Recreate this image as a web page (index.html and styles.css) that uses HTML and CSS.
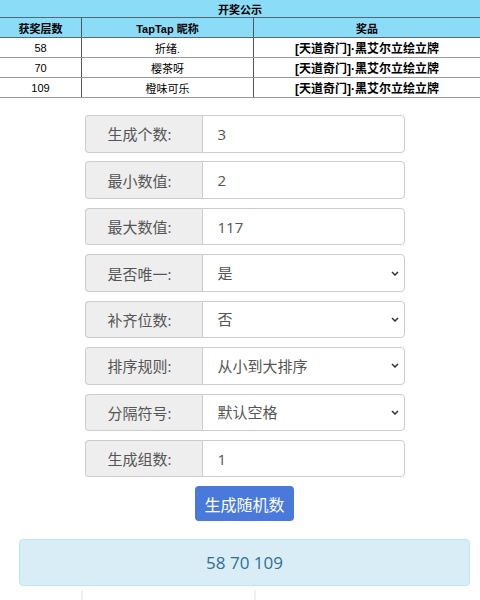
FILE: index.html
```html
<!DOCTYPE html>
<html lang="zh-CN">
<head>
    <meta charset="UTF-8">
    <meta name="viewport" content="width=device-width, initial-scale=1.0">
    <title>随机数生成</title>
    <link rel="stylesheet" href="styles.css">
</head>
<body>
    <table class="prize-table">
        <tr class="title-row">
            <th colspan="3">开奖公示</th>
        </tr>
        <tr class="head-row">
            <th class="col-floor">获奖层数</th>
            <th class="col-name">TapTap 昵称</th>
            <th class="col-prize">奖品</th>
        </tr>
        <tr>
            <td>58</td>
            <td>折绪.</td>
            <td class="prize">[天道奇门]·黑艾尔立绘立牌</td>
        </tr>
        <tr>
            <td>70</td>
            <td>樱茶呀</td>
            <td class="prize">[天道奇门]·黑艾尔立绘立牌</td>
        </tr>
        <tr>
            <td>109</td>
            <td>橙味可乐</td>
            <td class="prize">[天道奇门]·黑艾尔立绘立牌</td>
        </tr>
    </table>

    <div class="generator">
        <div class="input-group">
            <span class="group-label">生成个数:</span>
            <input class="group-field" type="text" value="3">
        </div>
        <div class="input-group">
            <span class="group-label">最小数值:</span>
            <input class="group-field" type="text" value="2">
        </div>
        <div class="input-group">
            <span class="group-label">最大数值:</span>
            <input class="group-field" type="text" value="117">
        </div>
        <div class="input-group">
            <span class="group-label">是否唯一:</span>
            <select class="group-field">
                <option>是</option>
                <option>否</option>
            </select>
        </div>
        <div class="input-group">
            <span class="group-label">补齐位数:</span>
            <select class="group-field">
                <option>否</option>
                <option>是</option>
            </select>
        </div>
        <div class="input-group">
            <span class="group-label">排序规则:</span>
            <select class="group-field">
                <option>从小到大排序</option>
                <option>从大到小排序</option>
                <option>不排序</option>
            </select>
        </div>
        <div class="input-group">
            <span class="group-label">分隔符号:</span>
            <select class="group-field">
                <option>默认空格</option>
                <option>逗号</option>
            </select>
        </div>
        <div class="input-group">
            <span class="group-label">生成组数:</span>
            <input class="group-field" type="text" value="1">
        </div>

        <button class="btn-generate" type="button">生成随机数</button>

        <div class="result-box">58 70 109</div>
    </div>

    <div class="table-tail">
        <span class="tail-cell tail-first"></span>
        <span class="tail-cell tail-second"></span>
        <span class="tail-cell"></span>
    </div>
</body>
</html>
```

FILE: styles.css
```css
body {
    margin: 0;
    font-family: "Liberation Sans", "Noto Sans CJK SC", sans-serif;
    background: #fff;
    overflow: hidden;
}

/* 开奖公示表格 */
.prize-table {
    width: 100%;
    border-collapse: collapse;
    font-size: 11px;
    color: #000;
}

.prize-table th,
.prize-table td {
    padding: 0;
    text-align: center;
    border-bottom: 1px solid #999;
}

.title-row th {
    height: 17px;
    background: #8adcf7;
    font-weight: bold;
    border-bottom: 1px solid #4a6a78;
}

.head-row th {
    height: 19px;
    background: #8adcf7;
    font-weight: bold;
    border-bottom: 1px solid #5a6a70;
}

.prize-table td {
    height: 19px;
}

.col-floor {
    width: 81px;
}

.col-name {
    width: 171px;
}

.prize-table tr > :nth-child(2) {
    border-left: 1px solid #555;
    border-right: 1px solid #555;
}

.title-row th {
    border-left: none !important;
    border-right: none !important;
}

.prize-table .prize {
    font-size: 12px;
    font-weight: bold;
}

/* 随机数表单 */
.generator {
    padding: 17px 0 0 19px;
    width: 451px;
    display: flex;
    flex-direction: column;
    align-items: center;
}

.input-group {
    display: flex;
    width: 320px;
    height: 37.5px;
    margin-bottom: 8.93px;
    font-family: "Open Sans", "Noto Sans CJK SC", sans-serif;
    font-size: 15px;
    color: #555;
}

.group-label {
    box-sizing: border-box;
    flex: 0 0 117px;
    display: flex;
    align-items: center;
    justify-content: center;
    padding-right: 8px;
    background: #eee;
    border: 1px solid #ccc;
    border-right: none;
    border-radius: 4px 0 0 4px;
}

.group-field {
    flex: 1 1 auto;
    min-width: 0;
    width: 0;
    box-sizing: border-box;
    height: 100%;
    padding: 0 15px;
    border: 1px solid #ccc;
    border-radius: 0 4px 4px 0;
    background: #fff;
    font: inherit;
    color: #555;
    outline: none;
}

select.group-field {
    appearance: none;
    padding-left: 15px;
    background-image: url("data:image/svg+xml,%3Csvg xmlns='http://www.w3.org/2000/svg' width='8' height='5'%3E%3Cpath d='M1 1l3 3 3-3' fill='none' stroke='%23333' stroke-width='1.5'/%3E%3C/svg%3E");
    background-repeat: no-repeat;
    background-position: right 5px center;
}

.btn-generate {
    width: 99px;
    height: 35px;
    border: none;
    border-radius: 4px;
    background: #4879db;
    color: #fff;
    font-family: "Noto Sans CJK SC", sans-serif;
    font-size: 16px;
    cursor: pointer;
}

.result-box {
    box-sizing: border-box;
    width: 451px;
    height: 47px;
    margin-top: 17.6px;
    display: flex;
    align-items: center;
    justify-content: center;
    background: #d9edf7;
    border: 1px solid #bce8f1;
    border-radius: 4px;
    color: #31708f;
    font-family: "Open Sans", sans-serif;
    font-size: 17px;
}

/* 下方表格的残留竖线 */
.table-tail {
    display: flex;
    height: 20px;
    margin-top: 4px;
}

.tail-cell {
    width: 81px;
}

.tail-first {
    border-right: 2px solid #f0f0f0;
}

.tail-second {
    width: 171px;
    border-right: 2px solid #f0f0f0;
}
```
